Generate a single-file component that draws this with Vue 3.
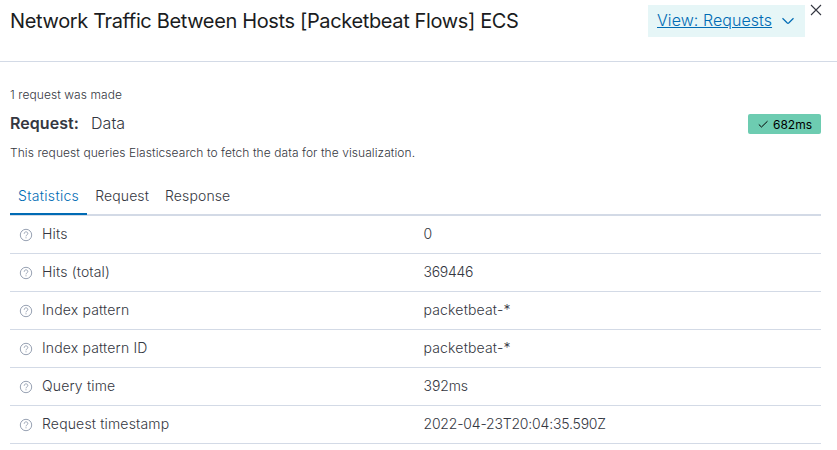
<script setup>
import { ref } from 'vue'

const tabs = ['Statistics', 'Request', 'Response']
const activeTab = ref('Statistics')
const stats = [
  { label: 'Hits', value: '0', kind: 'number' },
  { label: 'Hits (total)', value: '369446', kind: 'number' },
  { label: 'Index pattern', value: 'packetbeat-*', kind: 'text' },
  { label: 'Index pattern ID', value: 'packetbeat-*', kind: 'text' },
  { label: 'Query time', value: '392ms', kind: 'duration' },
  { label: 'Request timestamp', value: '2022-04-23T20:04:35.590Z', kind: 'date' },
]
</script>

<template>
  <section class="flyout">
    <header class="header">
      <h2 class="title">Network Traffic Between Hosts [Packetbeat Flows] ECS</h2>
      <button class="view-button" type="button">
        <span class="view-label">View: Requests</span>
        <svg class="chevron" width="16" height="16" viewBox="0 0 16 16">
          <path d="M2.500 5.300 7.300 10Q8 10.600 8.700 10L13.500 5.300" />
        </svg>
      </button>
      <button class="close" type="button" aria-label="Close">
        <svg width="12" height="12" viewBox="0 0 12 12"><path d="M1 1l10 10M11 1 1 11" /></svg>
      </button>
    </header>

    <main class="body">
      <p class="count">1 request was made</p>
      <div class="request">
        <strong class="request-key">Request:</strong>
        <span class="request-name">Data</span>
        <span class="badge">
          <svg width="12" height="12" viewBox="0 0 12 12"><path d="M1.800 6.500 4.500 9 10.500 3.200" /></svg>
          682ms
        </span>
      </div>
      <p class="description">This request queries Elasticsearch to fetch the data for the visualization.</p>

      <nav class="tabs">
        <button
          v-for="tab in tabs"
          :key="tab"
          type="button"
          class="tab"
          :class="{ active: tab === activeTab }"
          @click="activeTab = tab"
        >{{ tab }}</button>
      </nav>

      <dl class="stats">
        <div v-for="row in stats" :key="row.label" class="row">
          <dt class="label">
            <svg class="help" width="14" height="14" viewBox="0 0 14 14">
              <circle cx="7" cy="7" r="5.700" />
              <path d="M5.200 5.700C5.200 3.300 8.800 3.300 8.800 5.500C8.800 6.900 7 6.900 7 8.300M7 9.300V10.300" />
            </svg>
            <span>{{ row.label }}</span>
          </dt>
          <dd class="value" :class="row.kind">{{ row.value }}</dd>
        </div>
      </dl>
    </main>
  </section>
</template>

<style>
body {
  margin: 0;
  background: #fff;
}
</style>

<style scoped>
.flyout {
  height: 450px;
  overflow: hidden;
  font-family: Inter, "Liberation Sans", sans-serif;
  font-size: 14px;
  font-weight: 300;
  color: #343741;
}
button {
  margin: 0;
  padding: 0;
  border: 0;
  background: none;
  font: inherit;
  color: inherit;
}
svg {
  display: block;
  flex: none;
  fill: none;
}
p, h2, dl, dd {
  margin: 0;
}
.header {
  display: flex;
  align-items: flex-start;
  box-sizing: border-box;
  height: 62px;
  padding: 5px 15px 0 10px;
  border-bottom: 1px solid #d3dae6;
}
.title {
  flex: 1;
  font-size: 20px;
  line-height: 32px;
  font-weight: 400;
  letter-spacing: -0.360px;
  color: #1a1c21;
  white-space: nowrap;
}
.view-button {
  display: flex;
  align-items: flex-start;
  box-sizing: border-box;
  width: 157px;
  height: 32px;
  padding: 0 9px;
  gap: 8px;
  background: #e6f6f7;
  color: #006bb4;
  font-size: 16px;
  line-height: 30px;
  letter-spacing: 0.060px;
  white-space: nowrap;
}
.view-label {
  text-decoration: underline;
}
.chevron {
  margin-top: 8px;
  stroke: #006bb4;
  stroke-width: 1.2;
}
.close {
  margin: -1px 0 0 5px;
}
.close svg {
  stroke: #343741;
  stroke-width: 1.1;
}
.body {
  padding: 24px 16px 0 10px;
}
.count, .description {
  font-size: 12px;
  line-height: 18px;
  letter-spacing: 0.070px;
}
.request {
  display: flex;
  align-items: center;
  height: 24px;
  margin-top: 8px;
  font-size: 16px;
}
.request-key, .request-name {
  line-height: 22px;
  padding-bottom: 2px;
  letter-spacing: 0.060px;
}
.request-key {
  font-weight: 600;
  margin-right: 12px;
}
.badge {
  display: flex;
  align-items: center;
  box-sizing: border-box;
  gap: 4px;
  height: 20px;
  margin-left: auto;
  padding: 0 9px;
  border-radius: 2px;
  background: #6dccb1;
  color: #000;
  font-size: 12px;
  font-weight: 400;
}
.badge svg {
  stroke: #000;
  stroke-width: 1;
}
.description {
  margin-top: 8px;
}
.tabs {
  display: flex;
  box-sizing: border-box;
  height: 38px;
  margin-top: 16px;
  box-shadow: inset 0 -2px 0 #d3dae6;
}
.tab {
  box-sizing: border-box;
  height: 37px;
  padding: 0 8px 2px;
  line-height: 35px;
  letter-spacing: 0.120px;
}
.tab.active {
  letter-spacing: 0.320px;
  color: #006bb4;
  box-shadow: inset 0 -2px 0 #006bb4;
}
.row {
  display: flex;
  box-sizing: border-box;
  height: 38px;
  line-height: 36px;
  border-bottom: 1px solid #d3dae6;
}
.label {
  display: flex;
  align-items: flex-start;
  box-sizing: border-box;
  width: 405.500px;
  padding-left: 9px;
  gap: 9px;
  letter-spacing: 0.160px;
}
.help {
  margin-top: 12px;
  stroke: #98a2b3;
  stroke-width: 1;
}
.value {
  padding-left: 8px;
}
.value.number {
  letter-spacing: -0.280px;
}
.value.text {
  letter-spacing: 0.170px;
}
.value.duration {
  letter-spacing: -0.100px;
}
.value.date {
  letter-spacing: -0.190px;
}
</style>
